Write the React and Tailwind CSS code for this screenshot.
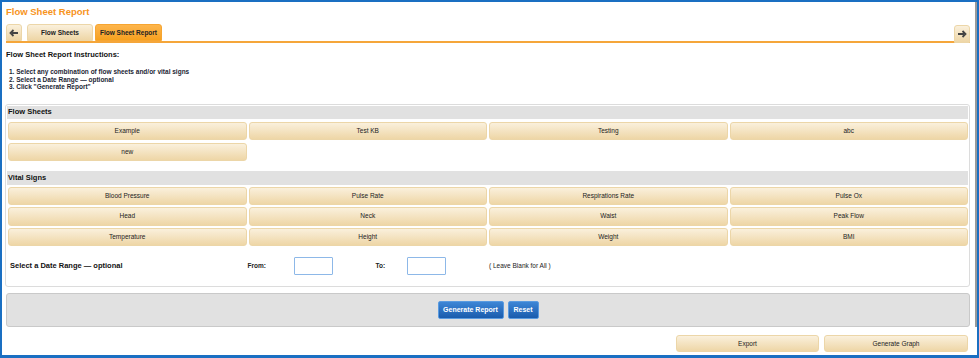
const flowSheets = ["Example", "Test KB", "Testing", "abc", "new"];
const vitals = [
  "Blood Pressure",
  "Pulse Rate",
  "Respirations Rate",
  "Pulse Ox",
  "Head",
  "Neck",
  "Waist",
  "Peak Flow",
  "Temperature",
  "Height",
  "Weight",
  "BMI",
];

const beige =
  "bg-gradient-to-b from-[#faf0dc] to-[#eed6a6] border border-[#ecd6a8] rounded-[3px] text-[#222]";

function Arrow({ dir }) {
  return (
    <svg width="10" height="8" viewBox="0 0 10 8">
      {dir === "left" ? (
        <path d="M9 4H3M4.5 1L1.5 4L4.5 7" stroke="#444" strokeWidth="1.8" fill="none" />
      ) : (
        <path d="M1 4H7M5.5 1L8.5 4L5.5 7" stroke="#444" strokeWidth="1.8" fill="none" />
      )}
    </svg>
  );
}

function Btn({ label, h = "h-[18px]" }) {
  return (
    <div className={`${beige} ${h} flex items-center justify-center text-[6.5px]`}>{label}</div>
  );
}

function Header({ children, className = "" }) {
  return (
    <div className={`bg-[#e1e1e1] h-[13px] flex items-center pl-[1px] font-bold text-[7.5px] text-[#111] ${className}`}>
      {children}
    </div>
  );
}

export default function App() {
  return (
    <div className="w-[979px] h-[358px] border-2 border-b-[3px] border-[#1a6fc2] bg-white flex font-['Liberation_Sans',Arial,sans-serif] overflow-hidden">
      <div className="flex-1 flex flex-col pl-[4px] pr-[5px]">
        <div className="h-[20px] flex items-center text-[9.5px] font-bold text-[#f7941d]">
          Flow Sheet Report
        </div>

        {/* tabs */}
        <div className="mt-[2px] flex items-end border-b-2 border-[#f5a63a] h-[19px]">
          <div className={`${beige} w-[16px] h-[17px] flex items-center justify-center rounded-b-none`}>
            <Arrow dir="left" />
          </div>
          <div className={`${beige} ml-[5px] w-[66px] h-[17px] flex items-center justify-center rounded-b-none font-bold text-[6.5px]`}>
            Flow Sheets
          </div>
          <div className="ml-[2px] w-[67px] h-[17px] flex items-center justify-center rounded-t-[3px] bg-gradient-to-b from-[#fdb54b] to-[#f7a11c] border border-[#f6a531] font-bold text-[6.5px] text-[#222]">
            Flow Sheet Report
          </div>
          <div className="flex-1" />
          <div className={`${beige} w-[16px] h-[18px] -mb-[2px] flex items-center justify-center rounded-b-none`}>
            <Arrow dir="right" />
          </div>
        </div>

        <div className="mt-[7px] h-[10px] leading-[10px] font-bold text-[7.5px] text-[#111]">
          Flow Sheet Report Instructions:
        </div>
        <ol className="mt-[8px] pl-[3px] font-bold text-[6.5px] leading-[7.5px] text-[#1b2533]">
          <li>1. Select any combination of flow sheets and/or vital signs</li>
          <li>2. Select a Date Range — optional</li>
          <li>3. Click "Generate Report"</li>
        </ol>

        {/* main panel */}
        <div className="mt-[13px] -ml-px border border-[#dcdcdc] rounded-[3px] pt-[1px] px-[1px] pb-[11px]">
          <Header>Flow Sheets</Header>
          <div className="mt-[3px] pl-[1px] grid grid-cols-4 gap-x-[2px] gap-y-[3px]">
            {flowSheets.map((f) => (
              <Btn key={f} label={f} />
            ))}
          </div>

          <Header className="mt-[10px] h-[14px]">Vital Signs</Header>
          <div className="mt-[2px] pl-[1px] grid grid-cols-4 gap-[2px]">
            {vitals.map((v) => (
              <Btn key={v} label={v} h="h-[18.5px]" />
            ))}
          </div>

          <div className="mt-[11px] pl-[1px] h-[18px] grid grid-cols-4 gap-[2px] items-center">
            <div className="pl-[2px] font-bold text-[7.5px] text-[#111]">Select a Date Range — optional</div>
            <div className="flex items-center text-[6.5px] font-bold text-[#222]">
              <span className="w-[46px] -ml-px">From:</span>
              <div className="w-[39px] h-[18px] border border-[#8db8e8] rounded-[1px]" />
              <span className="ml-[43px] w-[31px]">To:</span>
              <div className="w-[39px] h-[18px] border border-[#8db8e8] rounded-[1px]" />
            </div>
            <div className="text-[6.5px] text-[#222]">( Leave Blank for All )</div>
          </div>
        </div>

        {/* action bar */}
        <div className="mt-[6px] h-[34px] border border-[#c9c9c9] rounded-[3px] bg-[#e1e1e1] flex items-center justify-center gap-[4px]">
          <div className="h-[18px] w-[66px] flex items-center justify-center bg-gradient-to-b from-[#3d86d6] to-[#1a5cad] border border-[#5a9be0] rounded-[2px] text-white font-bold text-[7px]">
            Generate Report
          </div>
          <div className="h-[18px] w-[31px] flex items-center justify-center bg-gradient-to-b from-[#3d86d6] to-[#1a5cad] border border-[#5a9be0] rounded-[2px] text-white font-bold text-[7px]">
            Reset
          </div>
        </div>

        <div className="mt-[8px] flex justify-end gap-[5px] pr-[2px]">
          <div className="w-[143px]">
            <Btn label="Export" h="h-[17px]" />
          </div>
          <div className="w-[144px]">
            <Btn label="Generate Graph" h="h-[17px]" />
          </div>
        </div>
      </div>
      <div className="w-[2px] flex flex-col">
        <div className="h-[325px] bg-[#9a9a9a]" />
      </div>
    </div>
  );
}
